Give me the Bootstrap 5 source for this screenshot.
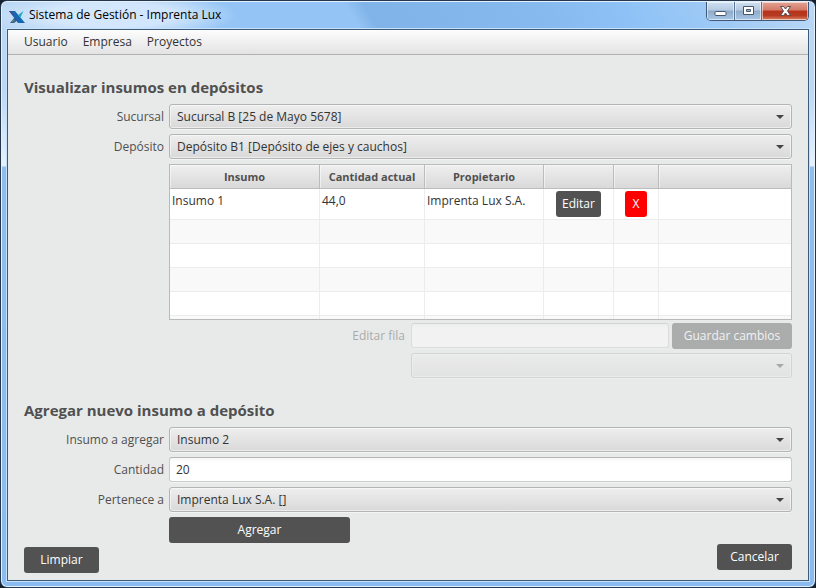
<!DOCTYPE html>
<html lang="es">
<head>
<meta charset="utf-8">
<meta name="viewport" content="width=device-width, initial-scale=1">
<title>Sistema de Gestión - Imprenta Lux</title>
<link href="https://cdn.jsdelivr.net/npm/bootstrap@5.3.0/dist/css/bootstrap.min.css" rel="stylesheet">
<style>
  body { font-family: "Open Sans", "Noto Sans", sans-serif; font-size: 12px; line-height: 18px; color: #333; background: #14202e; }
  .window-frame {
    min-height: 100vh; padding: 0 6px 6px; border: 1px solid #25374c; border-radius: 7px;
    box-shadow: inset 0 0 0 1px #e4f1fd;
    background: linear-gradient(#bcd8f5 0, #bcd8f5 90px, #e6f1fd 165px, #8fbdee 166px, #8abbf0 100%);
  }
  .title-bar {
    height: 27px; color: #000; margin: 1px -5px 0; padding-left: 7px; border-radius: 5px 5px 0 0;
    background:
      radial-gradient(ellipse 125px 24px at 110px 13px, rgba(225,239,253,.75) 50%, rgba(225,239,253,0)) no-repeat,
      linear-gradient(60deg, rgba(147,196,245,0) 0, #93c4f5 210px, #93c4f5 310px, #80b3e8 326px, #86baee 470px, #8ec2f6 550px, rgba(147,196,245,.7) 630px, rgba(190,218,247,.3) 100%);
  }
  .caption-group { border: 1px solid #3f5878; border-top: 0; border-radius: 0 0 5px 5px; overflow: hidden; margin-right: 5px; }
  .caption-btn { height: 18px; width: 27px; padding: 0; border: 0; border-right: 1px solid #5b7699; box-shadow: inset 0 0 0 1px rgba(255,255,255,.55); background: linear-gradient(#cfdff0 0, #b4cae2 45%, #8fabc9 50%, #a8c6e6 100%); line-height: 0; }
  .caption-min { width: 28px; }
  .caption-close { width: 46px; border-right: 0; background: linear-gradient(#e3a394 0, #d27a68 45%, #b8311c 50%, #b53a20 75%, #dc8566 100%); }
  .client { background: #e8eae9; border: 1px solid #3d5a78; box-shadow: 0 0 0 1px #c9e2fb; }
  .menu-bar { height: 25px; background: linear-gradient(#fdfdfd, #e3e3e3); border-bottom: 1px solid #b0b2b1; padding-left: 16px; gap: 15px; }
  .menu-bar a { color: #333; text-decoration: none; }
  h2 { font-size: 15px; line-height: 22px; font-weight: 700; color: #505050; margin: 21px 0 6px; }
  .form-grid { display: grid; grid-template-columns: 140px minmax(0, 1fr); column-gap: 5px; row-gap: 5px; align-items: center; }
  .form-grid label { text-align: right; color: #505050; }
  .fx-field { width: 100%; height: 25px; font-size: 12px; line-height: 18px; padding: 0 7px; border: 1px solid #b3b5b4; border-radius: 3px; color: #333; box-shadow: 0 1px 0 #f3f5f4; }
  select.fx-field { appearance: none; background: url("data:image/svg+xml,%3Csvg xmlns='http://www.w3.org/2000/svg' width='8' height='4'%3E%3Cpath d='M0 0h8L4 4z' fill='%23444'/%3E%3C/svg%3E") no-repeat right 7px center, linear-gradient(#eeeeee, #d9d9d9); box-shadow: inset 0 0 0 1px rgba(255,255,255,.5), 0 1px 0 #f3f5f4; }
  input.fx-field { background: linear-gradient(#f5f5f5, #fff 4px); border-color: #b3b5b4 #c8cac9 #c8cac9; padding: 0 6px; }
  .fx-field:disabled, .fx-btn:disabled { opacity: .4; }
  .fx-btn { height: 26px; padding: 0 6px; border: 0; border-radius: 3px; background: #525252; color: #fff; font-size: 12px; line-height: 18px; }
  .fx-btn:disabled { color: #fff; }
  .fx-delete { background: #f00; padding: 0 8px; }
  .w-action { width: 75px; }
  .w-add { width: 181px; }
  .edit-area { display: grid; grid-template-columns: 239px minmax(0, 1fr) 120px; gap: 4px 3px; align-items: start; margin-top: 3px; }
  .edit-area label { color: #a9abaa; padding: 4px 3px 0 0; }
  .span-two { grid-column: 2 / 4; }
  .actions { margin-top: 1px; }
  .actions .w-action:first-child { margin-top: 3px; }
  .grid-box { height: 156px; overflow: hidden; border: 1px solid #b8bab9; background: #fff; }
  .data-grid { width: 100%; table-layout: fixed; border-collapse: separate; border-spacing: 0; }
  .data-grid th { height: 24px; padding: 0; text-align: center; font-size: 11px; color: #505050; background: linear-gradient(#efefef, #d9d9d9); border-right: 1px solid #bcbcbc; border-bottom: 1px solid #bcbcbc; box-shadow: inset 1px 1px 0 rgba(255,255,255,.5); white-space: nowrap; }
  .data-grid td { height: 24px; padding: 0 2px; border-right: 1px solid #ececec; border-bottom: 1px solid #ececec; vertical-align: top; }
  .data-grid tr > :last-child { border-right: 0; }
  .data-grid tbody tr:nth-child(even) { background: #f9f9f9; }
  .data-grid .filled td { height: 31px; padding-top: 3px; }
  .data-grid .filled .cell-btn { padding-top: 2px; text-align: center; }
  .col-insumo { width: 150px; } .col-cantidad { width: 105px; } .col-propietario { width: 119px; }
  .col-editar { width: 70px; } .col-borrar { width: 45px; }
</style>
</head>
<body>
<div class="window-frame d-flex flex-column">
  <header class="title-bar d-flex align-items-start">
    <svg class="mt-2 me-1" width="16" height="14" viewBox="0 0 16 14" aria-hidden="true">
      <path d="M0 1h6l10 12H9z" fill="#1268b3"/><path d="M9 5l5.500-4-3 6.500z" fill="#27a9c4"/><path d="M1 13l5-6 3 3-4 3z" fill="#34569c"/><path d="M0 1h2l3 3.500-1 1z" fill="#57408d"/><path d="M2 12l3-2.500 1 1-3 2z" fill="#5a9a55"/>
    </svg>
    <span class="flex-grow-1 pt-1">Sistema de Gestión - Imprenta Lux</span>
    <div class="caption-group d-flex">
      <button class="caption-btn caption-min" aria-label="Minimizar"><svg width="13" height="14"><rect x="1" y="7.500" width="11" height="4" rx="1" fill="#fff" stroke="#47566b"/></svg></button>
      <button class="caption-btn" aria-label="Maximizar"><svg width="13" height="12"><path d="M1.500 1.500h10v8h-10z" fill="#fff" stroke="#47566b"/><path d="M4.500 4.500h4v2h-4z" fill="#9db6d3" stroke="#47566b"/></svg></button>
      <button class="caption-btn caption-close" aria-label="Cerrar"><svg width="13" height="12"><path d="M1.500 1.500h3l2 2.500 2-2.500h3L8.500 6l3 4.500h-3l-2-2.500-2 2.500h-3L4.500 6z" fill="#fff" stroke="#5b4a52"/></svg></button>
    </div>
  </header>
  <main class="client flex-grow-1 d-flex flex-column">
    <nav class="menu-bar d-flex align-items-center">
      <a href="#">Usuario</a><a href="#">Empresa</a><a href="#">Proyectos</a>
    </nav>
    <div class="px-3 pb-1 flex-grow-1">
      <h2>Visualizar insumos en depósitos</h2>
      <div class="form-grid">
        <label for="sucursal">Sucursal</label>
        <select id="sucursal" class="fx-field"><option>Sucursal B [25 de Mayo 5678]</option></select>
        <label for="deposito">Depósito</label>
        <select id="deposito" class="fx-field"><option>Depósito B1 [Depósito de ejes y cauchos]</option></select>
        <span></span>
        <div>
          <div class="grid-box">
            <table class="data-grid">
              <colgroup><col class="col-insumo"><col class="col-cantidad"><col class="col-propietario"><col class="col-editar"><col class="col-borrar"><col></colgroup>
              <thead><tr><th>Insumo</th><th>Cantidad actual</th><th>Propietario</th><th></th><th></th><th></th></tr></thead>
              <tbody>
                <tr class="filled"><td>Insumo 1</td><td>44,0</td><td>Imprenta Lux S.A.</td><td class="cell-btn"><button class="fx-btn">Editar</button></td><td class="cell-btn"><button class="fx-btn fx-delete">X</button></td><td></td></tr>
                <tr><td></td><td></td><td></td><td></td><td></td><td></td></tr>
                <tr><td></td><td></td><td></td><td></td><td></td><td></td></tr>
                <tr><td></td><td></td><td></td><td></td><td></td><td></td></tr>
                <tr><td></td><td></td><td></td><td></td><td></td><td></td></tr>
                <tr><td></td><td></td><td></td><td></td><td></td><td></td></tr>
              </tbody>
            </table>
          </div>
          <div class="edit-area">
            <label for="fila">Editar fila</label>
            <input id="fila" type="text" class="fx-field" disabled>
            <button class="fx-btn" disabled>Guardar cambios</button>
            <select class="fx-field span-two" aria-label="Propietario" disabled></select>
          </div>
        </div>
      </div>
      <h2>Agregar nuevo insumo a depósito</h2>
      <div class="form-grid">
        <label for="insumo">Insumo a agregar</label>
        <select id="insumo" class="fx-field"><option>Insumo 2</option></select>
        <label for="cantidad">Cantidad</label>
        <input id="cantidad" type="text" class="fx-field" value="20">
        <label for="pertenece">Pertenece a</label>
        <select id="pertenece" class="fx-field"><option>Imprenta Lux S.A. []</option></select>
        <span></span>
        <button class="fx-btn w-add">Agregar</button>
      </div>
      <div class="actions d-flex justify-content-between align-items-start">
        <button class="fx-btn w-action">Limpiar</button>
        <button class="fx-btn w-action">Cancelar</button>
      </div>
    </div>
  </main>
</div>
<script src="https://cdn.jsdelivr.net/npm/bootstrap@5.3.0/dist/js/bootstrap.bundle.min.js"></script>
</body>
</html>
